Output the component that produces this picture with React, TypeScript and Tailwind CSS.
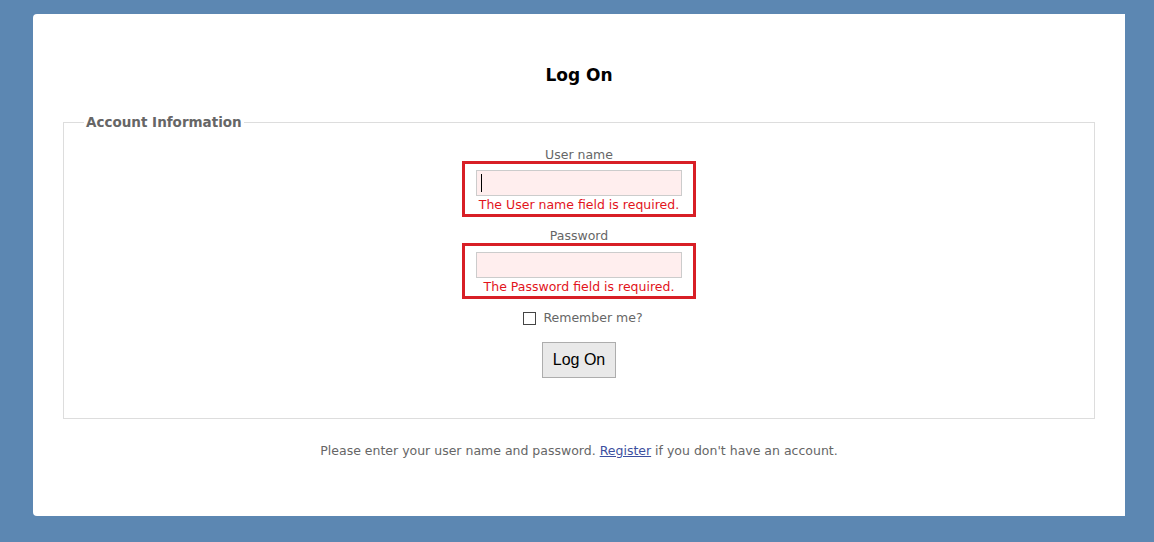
export default function App() {
  const font = { fontFamily: '"DejaVu Sans", "Open Sans", sans-serif' };

  return (
    <div className="min-h-[542px] bg-[#5c87b2] pt-[14px] pl-[33px] pr-[29px]" style={font}>
      <div className="h-[502px] rounded-l-[4px] bg-white px-[30px] pt-[49px]">
        {/* Title */}
        <h2 className="text-center text-[17px] font-bold leading-[24px] text-black">Log On</h2>

        {/* Account info */}
        <fieldset className="mt-[25px] h-[307px] border border-[#ddd] px-[20px]">
          <legend className="px-[2px] text-[13.5px] font-bold text-[#666]">Account Information</legend>

          <div className="flex flex-col items-center">
            <label className="mt-[16px] text-[12.5px] leading-[14px] text-[#666]">User name</label>
            <div className="mt-[-1px] flex w-[234px] flex-col items-center border-[3px] border-[#d81f26] pt-[6px]">
              <div className="flex h-[26px] w-[206px] items-center border border-[#ccc] bg-[#ffeeee] pl-[4px]">
                <span className="h-[18px] w-[1px] bg-black" />
              </div>
              <span className="text-[12.5px] leading-[18px] text-[#e2141c]">The User name field is required.</span>
            </div>

            <label className="mt-[12px] text-[12.5px] leading-[14px] text-[#666]">Password</label>
            <div className="mt-0 flex w-[234px] flex-col items-center border-[3px] border-[#d81f26] pt-[6px]">
              <div className="h-[26px] w-[206px] border border-[#ccc] bg-[#ffeeee]" />
              <span className="text-[12.5px] leading-[18px] text-[#e2141c]">The Password field is required.</span>
            </div>

            <div className="mt-[11px] flex h-[16px] items-center gap-[7px] pl-[8px]">
              <span className="h-[13px] w-[13px] border border-[#444] bg-white" />
              <span className="text-[12.5px] leading-[16px] text-[#666]">Remember me?</span>
            </div>

            <button
              className="mt-[16px] h-[36px] w-[74px] border border-[#adadad] bg-[#e9e9e9] text-[16px] text-black"
              style={{ fontFamily: '"Liberation Sans", Arial, sans-serif' }}
            >
              Log On
            </button>
          </div>
        </fieldset>

        {/* Footer note */}
        <p className="mt-[23px] text-center text-[12.5px] leading-[18px] text-[#666]">
          Please enter your user name and password.{" "}
          <a href="#" className="text-[#3c4fa0] underline">Register</a> if you don't have an account.
        </p>
      </div>
    </div>
  );
}
